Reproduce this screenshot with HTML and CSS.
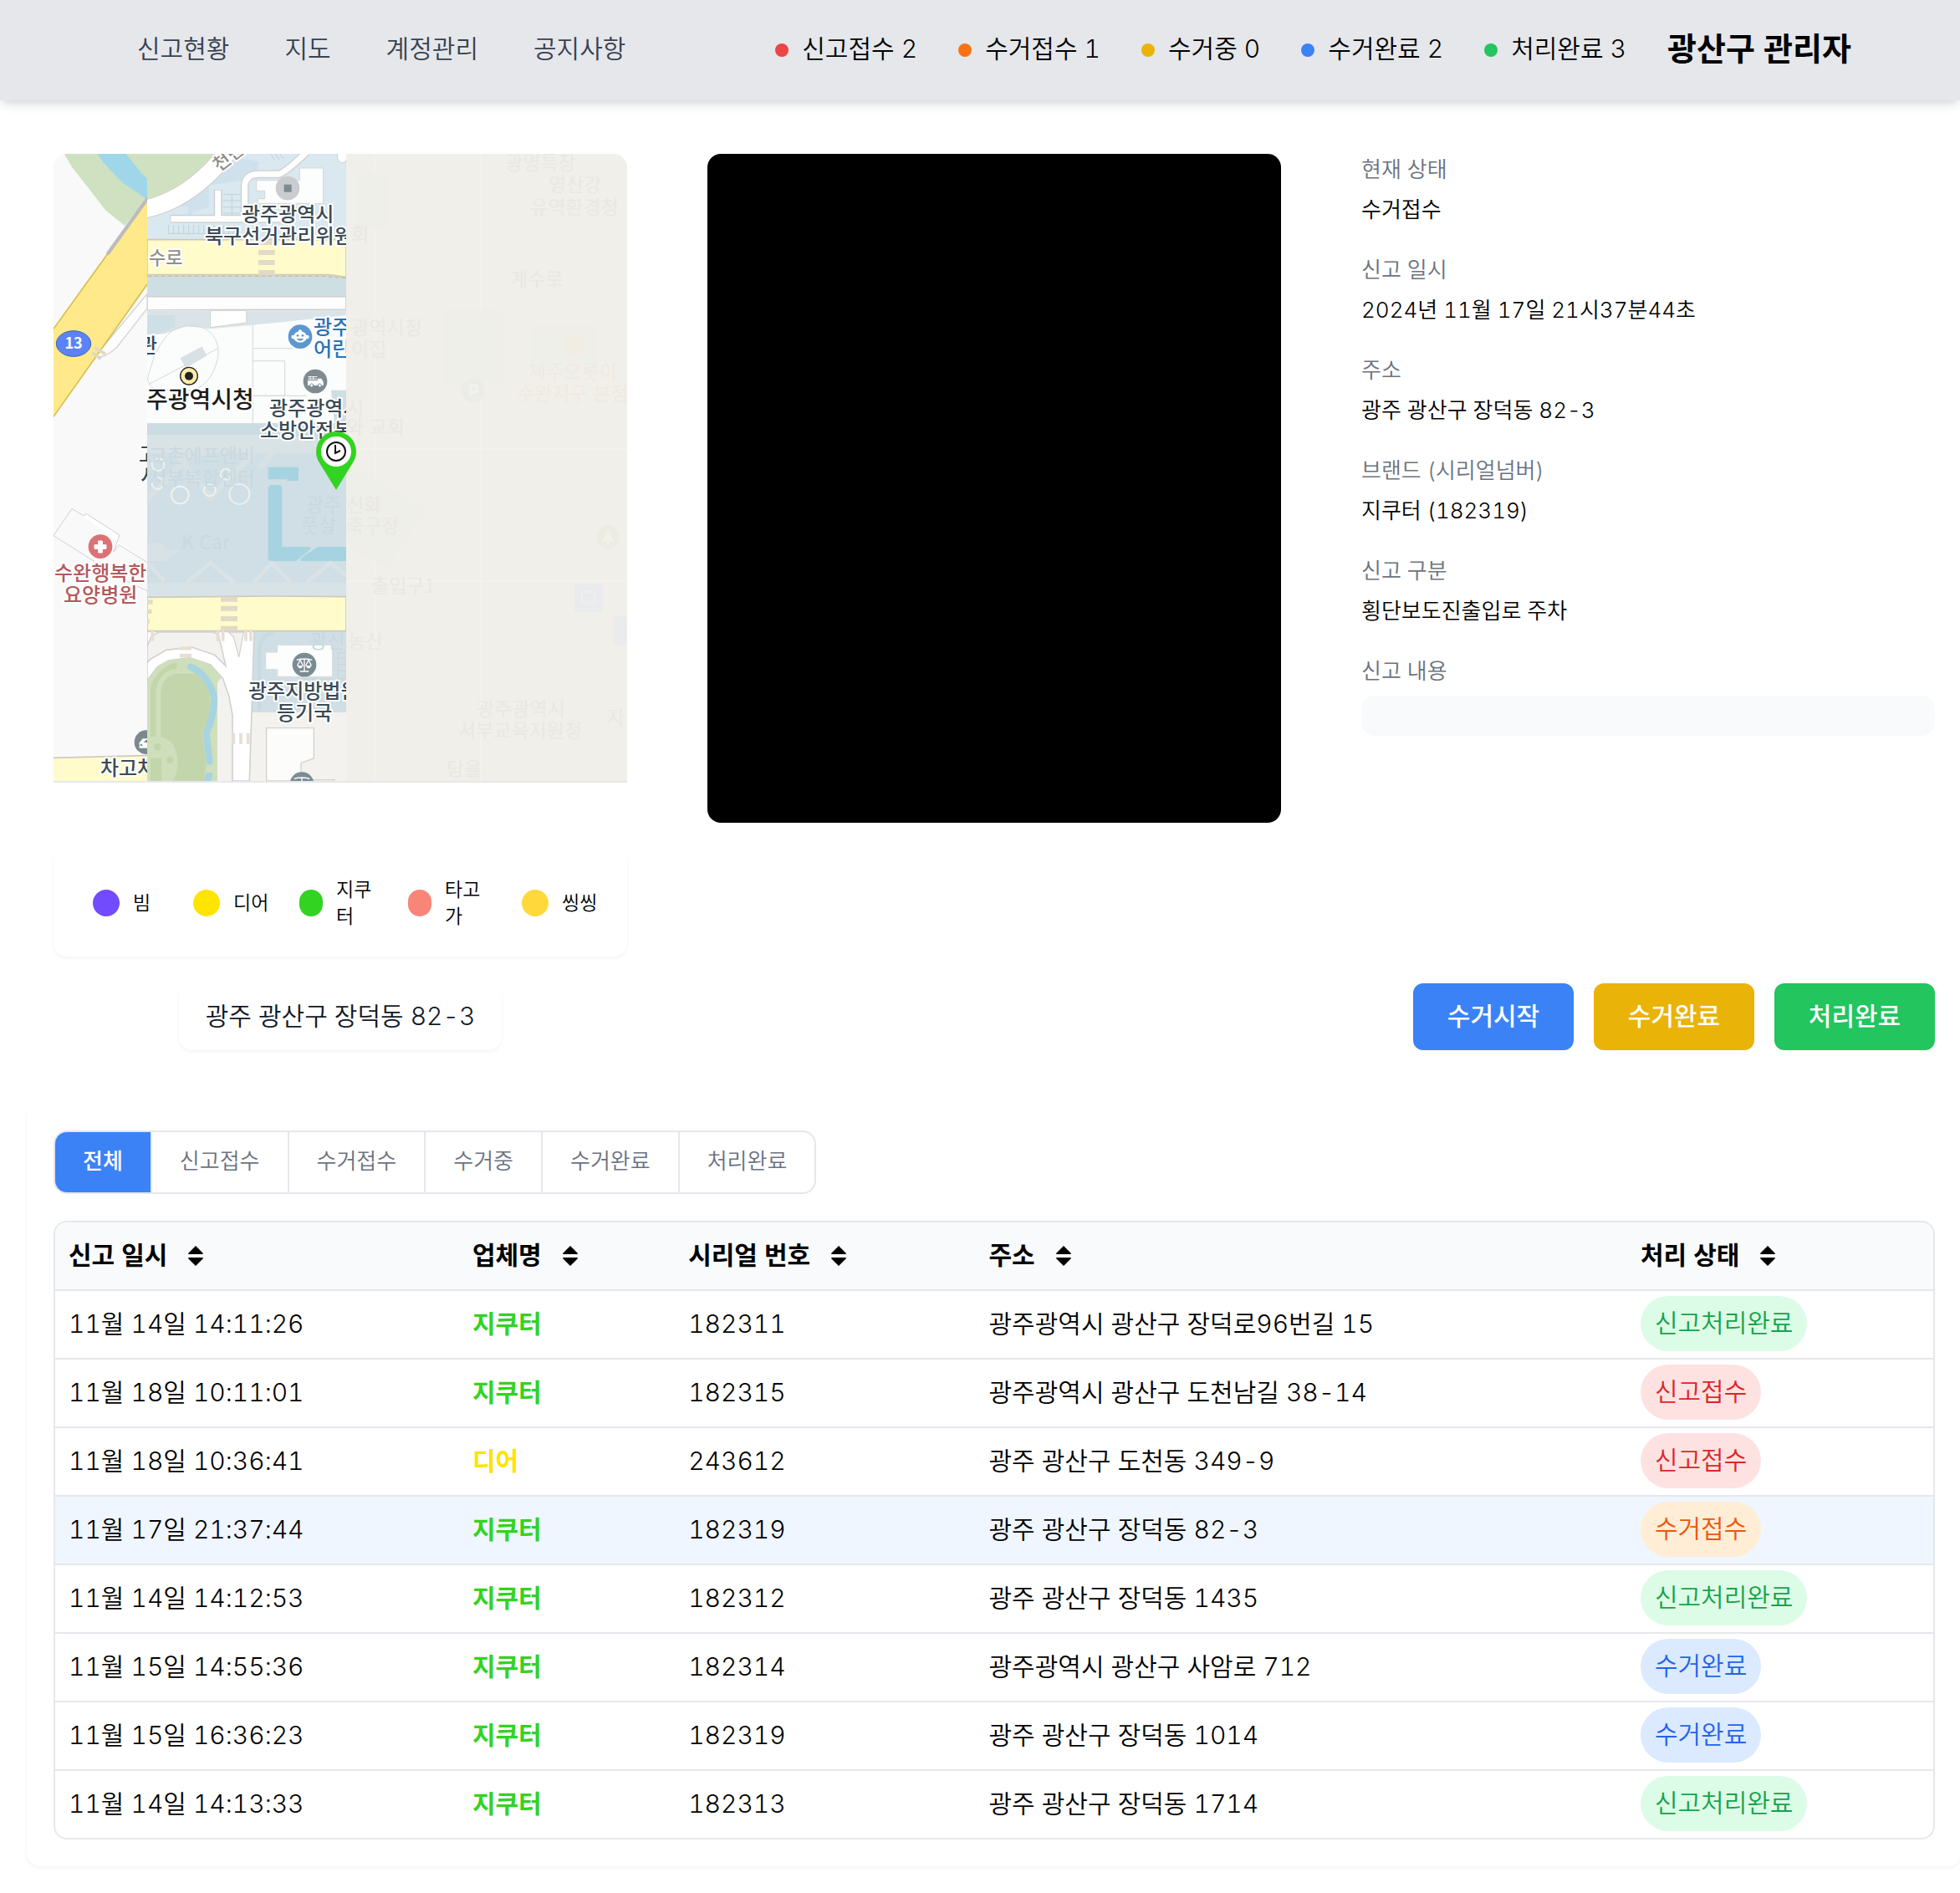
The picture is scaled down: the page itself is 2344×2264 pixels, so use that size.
FILE: index.html
```html
<!DOCTYPE html>
<html lang="ko">
<head>
<meta charset="utf-8">
<meta name="viewport" content="width=device-width, initial-scale=1">
<title>신고현황</title>
<link rel="stylesheet" href="styles.css">
</head>
<body>
<header class="topbar">
  <nav class="nav">
    <a href="#reports">신고현황</a>
    <a href="#map">지도</a>
    <a href="#accounts">계정관리</a>
    <a href="#notices">공지사항</a>
  </nav>
  <div class="summary">
    <span class="stat"><i class="dot dot-red"></i>신고접수 2</span>
    <span class="stat"><i class="dot dot-orange"></i>수거접수 1</span>
    <span class="stat"><i class="dot dot-yellow"></i>수거중 0</span>
    <span class="stat"><i class="dot dot-blue"></i>수거완료 2</span>
    <span class="stat"><i class="dot dot-green"></i>처리완료 3</span>
    <strong class="admin">광산구 관리자</strong>
  </div>
</header>

<main class="page">
  <section class="detail">
    <div class="map-column" id="map">
      <svg class="map" viewBox="0 0 686 750" preserveAspectRatio="xMidYMid slice" role="img" aria-label="신고 위치 지도">
        <rect width="686" height="750" fill="#f0efea"/>
        <!-- tiles that are still fading in -->
        <g stroke="#f3f2ee" stroke-width="2"><path d="M511 0V750M350 511H686M350 353H686M384 0V750"/></g>
        <g fill="#efefe9">
          <rect x="466" y="185" width="72" height="92"/><rect x="362" y="24" width="40" height="66"/><rect x="570" y="205" width="80" height="60"/>
          <path d="M350 370L445 425L400 495L350 470Z"/>
          <circle cx="502" cy="283" r="14" fill="#ebece8"/><circle cx="622" cy="229" r="14" fill="#f1ece4"/><circle cx="663" cy="458" r="14" fill="#ecece3"/>
          <rect x="623" y="514" width="34" height="34" rx="3" fill="#eaebec"/><rect x="670" y="553" width="16" height="34" rx="3" fill="#eaebec"/>
          <path d="M632 524H648V536H632ZM634 539H638M642 539H646" fill="none" stroke="#f0efee" stroke-width="2"/>
          <path d="M499 290V277H504A3 4 0 0 1 504 285H499" fill="none" stroke="#f1f1ed" stroke-width="3"/>
          <path d="M663 449L670 463H656ZM662 463H664V467H662Z" fill="#f2f2ec"/>
        </g>
        <g class="faded">
          <text x="540" y="19">광명특장</text><text x="592" y="45">영산강</text><text x="570" y="72">유역환경청</text>
          <text x="546" y="158">계수로</text><text x="356" y="105">회</text><text x="356" y="216">광역시청</text><text x="356" y="242">이집</text>
          <text x="568" y="269" class="food">제주오롯이</text><text x="554" y="295" class="food">수완지구 본점</text>
          <text x="350" y="312">시</text><text x="350" y="335">와 교회</text><text x="350" y="428">신화</text><text x="350" y="453">축구장</text>
          <text x="380" y="525">출입구1</text><text x="352" y="591">농산</text>
          <text x="506" y="672">광주광역시</text><text x="484" y="698">서부교육지원청</text><text x="662" y="682">자</text><text x="470" y="744">담율</text>
        </g>

        <!-- western tile column -->
        <svg width="112" height="750" viewBox="0 0 112 750">
          <rect width="112" height="750" fill="#f9f9f9"/>
          <g transform="translate(-14 -14) scale(.333333)">
            <path d="M80 42L110 92L170 168L228 244L298 300L378 200V42Z" fill="#d0e1c1"/>
            <path d="M200 42H302L362 116L378 130V206L362 195L290 146L217 70Z" fill="#a0d6ea"/>
            <path d="M378 544L262 684L192 768Q222 780 270 735L378 597Z" fill="#fdfdfd" stroke="#d4d4d4" stroke-width="4"/>
            <path d="M42 670L235 400L378 200V510L42 985Z" fill="#ffe98a"/>
            <path d="M42 670L240 395M378 510L42 985" fill="none" stroke="#d3bf52" stroke-width="5"/>
            <path d="M238 398L384 196" stroke="#bcbcbc" stroke-width="13" stroke-linecap="round"/>
            <path d="M190 738L228 760M180 756L212 778" stroke="#e0d8c8" stroke-width="11"/>
            <ellipse cx="114" cy="723" rx="62" ry="46" fill="#5d82f7" stroke="#3766b4" stroke-width="3"/>
          </g>
          <g transform="translate(-14 376) scale(.333333)">
            <path d="M108 145L152 172L158 162L279 240L258 300L277 275L390 345M42 242L190 335M108 145L42 242M295 400L378 440" fill="#fff" stroke="#d0d0d0" stroke-width="3"/>
            <circle cx="210" cy="281" r="43" fill="#dc7176"/>
            <path d="M203 261h14v14h14v14h-14v14h-14v-14h-14v-14h14z" fill="#fff" stroke="#fff" stroke-width="3"/>
            <path d="M42 1039L378 1031V1130H42Z" fill="#fffbcb"/><path d="M42 1039L378 1031" stroke="#d2c9ba" stroke-width="5"/>
            <circle cx="375" cy="983" r="43" fill="#7b898f"/>
            <path d="M350 1004V985L362 970H400V1004Z" fill="#fff"/><path d="M366 984L373 975H400V984Z" fill="#7b898f"/>
            <circle cx="357" cy="993" r="4" fill="#7b898f"/>
          </g>
          <g class="place">
            <text class="route" x="24" y="233">13</text>
            <text x="102" y="368">고</text><text x="104" y="394">서</text>
            <text class="hospital" x="1" y="510">수완행복한</text><text class="hospital" x="12" y="536">요양병원</text>
            <text x="56" y="743">차고차</text>
          </g>
        </svg>

        <!-- centre tile column -->
        <svg x="112" width="238" height="750" viewBox="112 0 238 750">
          <rect x="112" width="238" height="750" fill="#d0dfe5"/>
          <g transform="translate(-14 -14) scale(.333333)">
            <path d="M378 42H1092V350H378Z" fill="#dae8f0"/>
            <path d="M378 480H1092V555H378Z" fill="#cedfe4"/>
            <path d="M378 42H640C600 90 520 175 378 208Z" fill="#d0e1c1"/>
            <path d="M640 45L780 70L770 130L600 155V230L525 262V230L470 235L600 100Z" fill="#cfe1ec"/>
            <path d="M370 240C490 215 590 135 670 32" fill="none" stroke="#cfcfcf" stroke-width="68"/>
            <path d="M370 240C490 215 590 135 670 32" fill="none" stroke="#fff" stroke-width="62"/>
            <path d="M632 170V275M460 275H860M728 272V160Q728 115 780 115H850Q870 112 950 36" fill="none" stroke="#cdd0d2" stroke-width="29"/>
            <path d="M632 173V275M463 275H860M728 272V160Q728 115 780 115H850Q870 112 950 36" fill="none" stroke="#fff" stroke-width="21"/>
            <path d="M770 137H925V93H1010V220H775V203H800V175H770Z" fill="#fcfdfd" stroke="#d5d7d8" stroke-width="3"/>
            <path d="M650 187H714M650 210H714M650 233H714M650 255H714M682 187V260M455 297V328M473 297V328M491 297V328M509 297V328M527 297V328M545 297V328M563 297V328M581 297V328M599 297V328M617 297V328M635 297V328M653 297V328M671 297V328M689 297V328M455 328H700M822 42L836 65M838 42L852 63M854 42L868 60" fill="none" stroke="#c5d0d8" stroke-width="3"/>
            <ellipse cx="1078" cy="50" rx="18" ry="24" fill="#fff" stroke="#ccc" stroke-width="3"/>
            <circle cx="882" cy="165" r="43" fill="#cbccd0"/><rect x="869" y="152" width="27" height="27" fill="#7b8b92"/>
            <path d="M378 350H1092V484L1030 476H378Z" fill="#fffbcb" stroke="#d1c8b8" stroke-width="5"/>
            <path d="M380 481H1000L1092 488" stroke="#d8b474" stroke-width="3" stroke-dasharray="14 10" fill="none"/>
            <path d="M777 360H827M777 396H836M777 432H836M777 468H836" stroke="#e2dac6" stroke-width="18"/>
            <path d="M378 554H1092V600L378 603Z" fill="#fdfdfd" stroke="#cfcfcf" stroke-width="5"/>
            <path d="M378 604H1092V1010H378Z" fill="#fbfcfc"/>
            <path d="M378 604H1092V622L757 656L600 670L520 660L440 688L378 692Z" fill="#dae4e8"/>
            <path d="M378 620H478V662L420 688H378Z" fill="#cedfe6"/>
            <path d="M605 604H734V648L605 665Z" fill="#fff" stroke="#d0d4d5" stroke-width="3"/>
            <path d="M378 855C400 760 440 670 510 660H560C610 672 640 715 632 770C622 830 580 900 510 890C440 880 400 910 378 850M385 868L632 740M757 656V1010M757 740H900M757 785H872V910H757M757 910H950M378 1010H1092" fill="none" stroke="#d4d8d9" stroke-width="3"/>
            <path d="M498 776L574 735L590 766L518 808Z" fill="#d8e1e5" stroke="#cfd7db" stroke-width="2"/>
            <path d="M1038 890H1092V1010H1050Z" fill="#cedee4"/>
            <circle cx="528" cy="839" r="31" fill="#ffebaa" stroke="#222" stroke-width="4"/><circle cx="528" cy="839" r="15" fill="#222"/>
            <circle cx="927" cy="698" r="43" fill="#5b97d0"/><ellipse cx="927" cy="699" rx="24" ry="20" fill="#fff"/><circle cx="902" cy="699" r="7" fill="#fff"/><circle cx="952" cy="699" r="7" fill="#fff"/><circle cx="927" cy="679" r="6" fill="#fff"/><circle cx="918" cy="694" r="4" fill="#5b97d0"/><circle cx="936" cy="694" r="4" fill="#5b97d0"/><path d="M914 705H940Q927 720 914 705Z" fill="#5b97d0"/>
            <circle cx="981" cy="858" r="43" fill="#7f8a91"/><path d="M954 855H990V848H1003L1010 860V873H954Z" fill="#fff"/><path d="M955 842H988M955 850H988M963 841V851M974 841V851" stroke="#fff" stroke-width="3"/><g fill="#fff" stroke="#7f8a91" stroke-width="3"><circle cx="968" cy="873" r="6"/><circle cx="997" cy="873" r="6"/></g>
            <path d="M378 1010H1092V1075L830 1050H378Z" fill="#cbdce3"/>
            <path d="M378 1050H830L1092 1075V1115H378Z" fill="#d9e3e6"/>
            <path d="M378 1280L440 1220L540 1115L600 1115M480 1115L605 1275L760 1115M830 1115L780 1170" fill="none" stroke="#d8e2e5" stroke-width="20"/>
            <g fill="none" stroke="#f3f3ee" stroke-width="5"><circle cx="417" cy="1157" r="22"/><circle cx="661" cy="1192" r="19"/><circle cx="416" cy="1224" r="21"/><circle cx="496" cy="1266" r="31"/><circle cx="603" cy="1249" r="21"/><circle cx="709" cy="1263" r="36"/></g>
            <path d="M812 1166H921V1215H880V1210H812Z" fill="#a6d3e1"/>
          </g>
          <g transform="translate(-14 376) scale(.333333)">
            <path d="M820 60H855Q862 62 862 70V282H960Q970 286 960 294L912 333H820Q812 332 812 322V68ZM990 282H1092V333H930Q925 325 935 318Z" fill="#a6d3e1"/>
            <path d="M378 410H1092V460H378Z" fill="#d8e3e7"/>
            <path d="M520 410L605 340L690 410M760 410L825 340L895 410M950 410L1035 340L1092 385M378 340L440 405" fill="none" stroke="#dae3e5" stroke-width="14"/>
            <path d="M378 270H440V290L495 297L445 333H378Z" fill="#d8e2e6"/>
            <path d="M378 584H1092V1122H378Z" fill="#f3f2ee"/>
            <path d="M755 584H1092V876H745Z" fill="#d0dfe5"/>
            <path d="M378 463L820 459L1092 461V584H378Z" fill="#fffbcb" stroke="#cfc9bb" stroke-width="5"/>
            <path d="M642 470H702M642 503H702M642 540H702M642 575H702" stroke="#e2dac6" stroke-width="18"/>
            <path d="M378 480H398M378 514H394M378 549H386" stroke="#e2dac6" stroke-width="16"/>
            <path d="M378 586H762L745 1122H684V885L672 820L650 755L605 705L530 680L455 690L415 712L378 762Z" fill="#fff" stroke="#d2d2d2" stroke-width="5"/>
            <path d="M378 640L392 605L418 588H618L635 602L660 710L620 670L538 642L447 652L388 686L378 698Z" fill="#f3f2ee" stroke="#d2d2d2" stroke-width="5"/>
            <path d="M670 588H724L707 678L688 605Z" fill="#f3f2ee" stroke="#d2d2d2" stroke-width="4"/>
            <path d="M632 580V620M650 580V620M732 580V620M750 580V620M397 580V620M688 950V990M714 950V990M740 950V990" stroke="#e6dfd6" stroke-width="11"/>
            <path d="M495 646H537M495 672H537" stroke="#e6dfd6" stroke-width="13"/>
            <path d="M378 765L415 712L455 690L530 680L605 705L645 752L630 768V1122H378Z" fill="#cfdfbb"/>
            <path d="M390 1122V790Q410 715 484 696V720H560Q600 770 604 830Q615 880 576 950L590 1060L582 1122Z" fill="#c3d6ab"/>
            <path d="M418 965V800Q430 725 500 728H545" fill="none" stroke="#cfdfbb" stroke-width="17"/>
            <path d="M390 965Q440 955 470 990Q505 1060 470 1122H430V1040H390Z" fill="#cfdfbb"/>
            <circle cx="415" cy="1000" r="13" fill="#c3d6ab"/><circle cx="459" cy="1047" r="13" fill="#c3d6ab"/>
            <path d="M534 713Q595 735 618 820Q620 890 590 950L602 1052" fill="none" stroke="#a7d4e1" stroke-width="24" stroke-linecap="round"/><path d="M590 1092H614L608 1122H582Z" fill="#a7d4e1"/>
            <path d="M780 870V660Q780 600 830 590" fill="none" stroke="#c7dae2" stroke-width="14"/>
            <path d="M845 634H1043V748H845V722H803V660H845Z" fill="#fcfdfd" stroke="#d6dadb" stroke-width="3"/>
            <path d="M1062 660V755M1062 662H1092M1062 682H1092M1062 704H1092M1062 726H1092M1062 755H1092M930 756H1040" stroke="#d3cfd0" stroke-width="3"/>
            <circle cx="942" cy="705" r="43" fill="#7b8b92"/>
            <g fill="none" stroke="#fff" stroke-width="4"><path d="M942 682V728M926 729H958M914 688Q942 680 970 688M927 688L917 708M927 688L937 708M957 688L947 708M957 688L967 708"/></g>
            <path d="M916 708H938Q927 728 916 708ZM946 708H968Q957 728 946 708Z" fill="#fff"/>
            <path d="M806 932H976V1041L930 1058V1122H806Z" fill="#fcfcfa" stroke="#d2d2d2" stroke-width="4"/><path d="M930 1118H1050V1130" fill="none" stroke="#d2d2d2" stroke-width="4"/>
            <circle cx="933" cy="1133" r="43" fill="#7b8b92"/><path d="M905 1114Q933 1106 961 1114M933 1108V1130" stroke="#fff" stroke-width="4" fill="none"/>
          </g>
          <g class="faded centre-faded"><text x="114" y="369">교촌에프앤비</text><text x="114" y="396">서부복합센터</text><text x="153" y="473">K Car</text><text x="302" y="428">광주</text><text x="296" y="453">풋살</text><text x="306" y="591">광신</text></g>
          <g class="place">
            <text class="road" x="198" y="22" transform="rotate(-38 198 22)">천변</text>
            <text x="225" y="81">광주광역시</text><text x="181" y="107">북구선거관리위원</text>
            <text class="road" x="114" y="132">수로</text>
            <text class="kids" x="311" y="216">광주</text><text class="kids" x="311" y="242">어린</text>
            <text x="102" y="238">관</text>
            <text class="city" x="111" y="304">주광역시청</text>
            <text x="258" y="313">광주광역시</text><text x="247" y="339">소방안전본</text>
            <text x="233" y="651">광주지방법원</text><text x="267" y="677">등기국</text>
          </g>
        </svg>

        <!-- report marker -->
        <path d="M338 402L319 371Q314 364 314 356A24 24 0 0 1 362 356Q362 364 357 371Z" fill="#33d321"/>
        <circle cx="338" cy="356" r="18" fill="#fff"/>
        <circle cx="338" cy="356" r="11" fill="none" stroke="#111" stroke-width="2"/>
        <path d="M337 348V358L343 355" fill="none" stroke="#111" stroke-width="2"/>
      </svg>
      <ul class="legend">
        <li><i class="swatch beam"></i><span>빔</span></li>
        <li><i class="swatch deer"></i><span>디어</span></li>
        <li><i class="swatch narrow gcoo"></i><span>지쿠터</span></li>
        <li><i class="swatch narrow tago"></i><span>타고가</span></li>
        <li><i class="swatch ssing"></i><span>씽씽</span></li>
      </ul>
    </div>

    <div class="photo"></div>

    <dl class="info">
      <div><dt>현재 상태</dt><dd>수거접수</dd></div>
      <div><dt>신고 일시</dt><dd>2024년 11월 17일 21시37분44초</dd></div>
      <div><dt>주소</dt><dd>광주 광산구 장덕동 82-3</dd></div>
      <div><dt>브랜드 (시리얼넘버)</dt><dd>지쿠터 (182319)</dd></div>
      <div><dt>신고 구분</dt><dd>횡단보도진출입로 주차</dd></div>
      <div><dt>신고 내용</dt><dd class="memo"></dd></div>
    </dl>

    <p class="address">광주 광산구 장덕동 82-3</p>
    <div class="actions">
      <button type="button" class="start">수거시작</button>
      <button type="button" class="collected">수거완료</button>
      <button type="button" class="done">처리완료</button>
    </div>
  </section>

  <section class="reports" id="reports">
    <div class="tabs">
      <button type="button" class="active">전체</button>
      <button type="button">신고접수</button>
      <button type="button">수거접수</button>
      <button type="button">수거중</button>
      <button type="button">수거완료</button>
      <button type="button">처리완료</button>
    </div>
    <div class="table-frame">
      <table>
        <colgroup><col class="c-date"><col class="c-brand"><col class="c-serial"><col class="c-address"><col class="c-state"></colgroup>
        <thead>
          <tr>
            <th scope="col"><button type="button">신고 일시<svg viewBox="0 0 18 24"><path d="M9 0L18 9Q18 10 17 10H1Q0 10 0 9ZM9 24L18 15Q18 14 17 14H1Q0 14 0 15Z"/></svg></button></th>
            <th scope="col"><button type="button">업체명<svg viewBox="0 0 18 24"><path d="M9 0L18 9Q18 10 17 10H1Q0 10 0 9ZM9 24L18 15Q18 14 17 14H1Q0 14 0 15Z"/></svg></button></th>
            <th scope="col"><button type="button">시리얼 번호<svg viewBox="0 0 18 24"><path d="M9 0L18 9Q18 10 17 10H1Q0 10 0 9ZM9 24L18 15Q18 14 17 14H1Q0 14 0 15Z"/></svg></button></th>
            <th scope="col"><button type="button">주소<svg viewBox="0 0 18 24"><path d="M9 0L18 9Q18 10 17 10H1Q0 10 0 9ZM9 24L18 15Q18 14 17 14H1Q0 14 0 15Z"/></svg></button></th>
            <th scope="col"><button type="button">처리 상태<svg viewBox="0 0 18 24"><path d="M9 0L18 9Q18 10 17 10H1Q0 10 0 9ZM9 24L18 15Q18 14 17 14H1Q0 14 0 15Z"/></svg></button></th>
          </tr>
        </thead>
        <tbody>
          <tr><td>11월 14일 14:11:26</td><td class="brand-gcoo">지쿠터</td><td>182311</td><td>광주광역시 광산구 장덕로96번길 15</td><td><span class="badge green">신고처리완료</span></td></tr>
          <tr><td>11월 18일 10:11:01</td><td class="brand-gcoo">지쿠터</td><td>182315</td><td>광주광역시 광산구 도천남길 38-14</td><td><span class="badge red">신고접수</span></td></tr>
          <tr><td>11월 18일 10:36:41</td><td class="brand-deer">디어</td><td>243612</td><td>광주 광산구 도천동 349-9</td><td><span class="badge red">신고접수</span></td></tr>
          <tr class="selected"><td>11월 17일 21:37:44</td><td class="brand-gcoo">지쿠터</td><td>182319</td><td>광주 광산구 장덕동 82-3</td><td><span class="badge orange">수거접수</span></td></tr>
          <tr><td>11월 14일 14:12:53</td><td class="brand-gcoo">지쿠터</td><td>182312</td><td>광주 광산구 장덕동 1435</td><td><span class="badge green">신고처리완료</span></td></tr>
          <tr><td>11월 15일 14:55:36</td><td class="brand-gcoo">지쿠터</td><td>182314</td><td>광주광역시 광산구 사암로 712</td><td><span class="badge blue">수거완료</span></td></tr>
          <tr><td>11월 15일 16:36:23</td><td class="brand-gcoo">지쿠터</td><td>182319</td><td>광주 광산구 장덕동 1014</td><td><span class="badge blue">수거완료</span></td></tr>
          <tr><td>11월 14일 14:13:33</td><td class="brand-gcoo">지쿠터</td><td>182313</td><td>광주 광산구 장덕동 1714</td><td><span class="badge green">신고처리완료</span></td></tr>
        </tbody>
      </table>
    </div>
  </section>
</main>
</body>
</html>
```

FILE: styles.css
```css
* { box-sizing: border-box; }

body {
  margin: 0;
  overflow-x: hidden;
  background: #fff;
  color: #000;
  font-family: Inter, "Noto Sans CJK KR", sans-serif;
  font-size: 30px;
  font-weight: 350;
  line-height: 48px;
  font-variant-numeric: tabular-nums;
}

button { font: inherit; color: inherit; border: 0; background: none; padding: 0; cursor: pointer; }
ul, dl, dd, p { margin: 0; padding: 0; }

/* Header */
.topbar {
  display: flex;
  justify-content: space-between;
  align-items: center;
  height: 120px;
  padding: 0 130px 4px 164px;
  background: #e5e7eb;
  box-shadow: 0 8px 12px -2px rgba(0, 0, 0, .1), 0 4px 8px -4px rgba(0, 0, 0, .1);
  white-space: nowrap;
}
.nav { display: flex; gap: 66px; }
.nav a { color: #374151; text-decoration: none; }
.summary { display: flex; align-items: center; gap: 49px; }
.stat { display: flex; align-items: center; gap: 16px; }
.dot { width: 16px; height: 16px; margin-top: 4px; border-radius: 50%; }
.dot-red { background: #ef4444; }
.dot-orange { background: #f97316; }
.dot-yellow { background: #eab308; }
.dot-blue { background: #3b82f6; }
.dot-green { background: #22c55e; }
.admin { font-size: 38px; font-weight: 700; }

.page { padding: 64px 0 32px 32px; }

/* Selected report */
.detail {
  display: grid;
  grid-template-columns: repeat(3, minmax(0, 1fr));
  gap: 32px 96px;
  padding: 0 30px 0 32px;
}
.map-column { display: flex; flex-direction: column; gap: 80px; }
.map {
  display: block;
  width: 100%;
  height: 752px;
  border-bottom: 2px solid #e5e7eb;
  border-radius: 16px 16px 0 0;
}
.map text { font-family: "Noto Sans CJK KR", sans-serif; }
.faded { font-size: 23px; font-weight: 400; fill: #e9e8e3; }
.food { fill: #f0e9e0; }
.centre-faded { fill: #c9d8df; }
.place { font-size: 24px; font-weight: 500; fill: #3b4a54; stroke: #fff; stroke-width: 4px; stroke-linejoin: round; paint-order: stroke; }
.place .route { font-size: 18px; font-weight: 700; fill: #fff; stroke: none; text-anchor: middle; }
.place .hospital { fill: #b5585c; }
.place .road { font-size: 22px; fill: #918f8a; }
.place .kids { fill: #2b72b8; }
.place .city { font-size: 28px; fill: #1c1c1c; }

.legend {
  display: grid;
  grid-template-columns: 120fr 127fr 130fr 136fr 96fr;
  align-items: center;
  padding: 32px 30px 32px 47px;
  border-radius: 16px;
  box-shadow: 0 2px 4px rgba(0, 0, 0, .05);
  list-style: none;
  font-size: 23px;
  line-height: 32px;
}
.legend li { display: flex; align-items: center; gap: 16px; }
.legend span { width: 48px; }
.swatch { flex: none; width: 32px; height: 32px; border-radius: 16px; }
.swatch.narrow { width: 28px; }
.beam { background: #734bff; }
.deer { background: #ffe400; }
.gcoo { background: #33d321; }
.tago { background: #f98579; }
.ssing { background: #ffd93b; }

.photo { height: 800px; border-radius: 16px; background: #000; }

.info { display: flex; flex-direction: column; gap: 32px; font-size: 26px; line-height: 38px; }
.info div { display: flex; flex-direction: column; gap: 10px; padding-bottom: 2px; }
.info dt { color: #6b7280; }
.info .memo { height: 48px; border-radius: 16px; background: #f9fafb; }

.address {
  justify-self: center;
  padding: 15px 32px 17px;
  border-radius: 16px;
  box-shadow: 0 2px 4px rgba(0, 0, 0, .05);
  color: #111827;
}
.actions { grid-column: 2 / -1; display: flex; justify-content: flex-end; gap: 24px; }
.actions button { width: 192px; height: 80px; padding-bottom: 2px; border-radius: 12px; color: #fff; font-weight: 500; }
.start { background: #3b82f6; }
.collected { background: #eab308; }
.done { background: #22c55e; }

/* Report list */
.reports {
  margin: 64px -2px 0 0;
  padding: 32px;
  border-radius: 16px;
  box-shadow: 0 2px 4px rgba(0, 0, 0, .05);
}
.tabs {
  display: inline-flex;
  vertical-align: top;
  overflow: hidden;
  border: 2px solid #e5e7eb;
  border-radius: 16px;
  font-size: 26px;
}
.tabs button { height: 72px; padding: 0 33px 2px; color: #6b7280; }
.tabs button + button { border-left: 2px solid #e5e7eb; }
.tabs .active { background: #3b82f6; color: #fff; font-weight: 500; }

.table-frame { margin-top: 32px; overflow: hidden; border: 2px solid #e5e7eb; border-radius: 16px; }
table { width: 100%; table-layout: fixed; border-collapse: separate; border-spacing: 0; }
.c-date { width: 21.5%; }
.c-brand { width: 11.5%; }
.c-serial { width: 16%; }
.c-address { width: 34.7%; }
.c-state { width: 16.3%; }
th, td { height: 82px; padding: 0 16px 2px; text-align: left; border-bottom: 2px solid #e5e7eb; }
tbody tr:last-child td { height: 80px; border-bottom: 0; }
th { background: #f9fafb; }
th button { display: flex; align-items: center; gap: 25px; font-weight: 700; }
th svg { width: 18px; height: 24px; margin-top: 2px; }
.selected td { background: #eff6ff; }
.brand-gcoo { color: #33d321; font-weight: 700; }
.brand-deer { color: #ffe400; font-weight: 700; }
.badge { display: inline-block; vertical-align: middle; padding: 8px 17px 10px; border-radius: 33px; }
.green { background: #dcfce7; color: #16a34a; }
.red { background: #fee2e2; color: #dc2626; }
.orange { background: #ffedd5; color: #ea580c; }
.blue { background: #dbeafe; color: #2563eb; }
```
